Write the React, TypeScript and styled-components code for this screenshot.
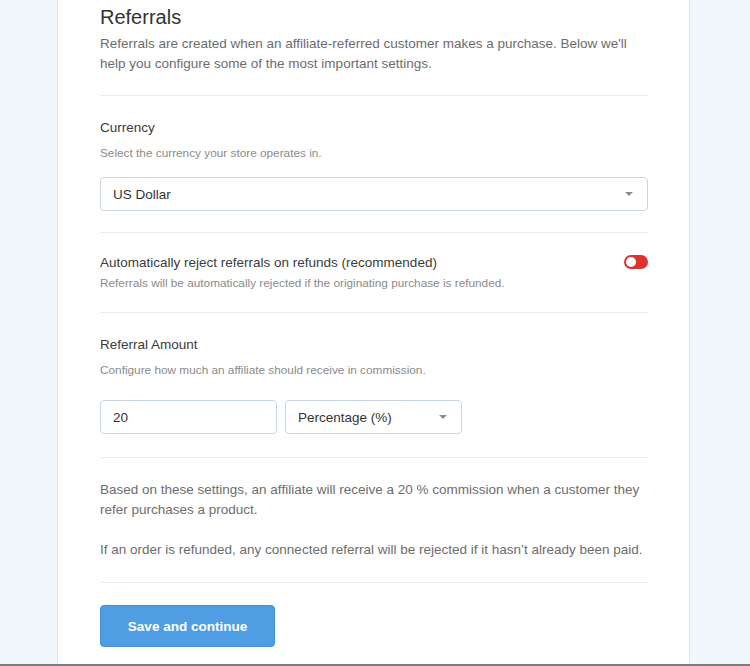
import React from "react"
import styled, { createGlobalStyle } from "styled-components"

const Global = createGlobalStyle`
  html, body {
    margin: 0;
    padding: 0;
    background: #f1f6fd;
    font-family: "Liberation Sans", Arial, sans-serif;
  }
  * { box-sizing: border-box; }
`

const Screen = styled.div`
  display: flex;
  flex-direction: column;
  height: 666px;
  overflow: hidden;
`

const Stage = styled.div`
  flex: 1;
  display: flex;
  padding-left: 57px;
  overflow: hidden;
`

const Card = styled.div`
  width: 633px;
  background: #fff;
  border-left: 1px solid #dfe6ef;
  border-right: 1px solid #dfe6ef;
  padding: 5px 41px 0 42px;
`

const WindowEdge = styled.div`
  height: 2px;
  background: #7d7d7d;
`

const Title = styled.h1`
  margin: 0;
  font-size: 20px;
  line-height: 24px;
  font-weight: 400;
  color: #333;
`

const Intro = styled.p`
  margin: 5px 0 0;
  font-size: 13.5px;
  line-height: 20px;
  color: #6d6d6d;
`

const Section = styled.div<{ top?: number; bottom?: number }>`
  padding: ${(p) => p.top ?? 22}px 0 ${(p) => p.bottom ?? 22}px;
  border-top: 1px solid #e4ebf4;
`

const Head = styled.div`
  margin-bottom: 21px;
`

const Row = styled.div`
  display: flex;
  align-items: flex-start;
  justify-content: space-between;
`

const Label = styled.div`
  font-size: 13.5px;
  line-height: 20px;
  color: #3b3b3b;
`

const Help = styled.div<{ gap?: number }>`
  margin-top: ${(p) => p.gap ?? 6}px;
  font-size: 11.8px;
  line-height: 18px;
  color: #8a8a8a;
`

const Controls = styled.div<{ top: number }>`
  display: flex;
  gap: 8px;
  margin-top: ${(p) => p.top}px;
`

const Box = styled.div<{ width?: number }>`
  display: flex;
  align-items: center;
  justify-content: space-between;
  width: ${(p) => (p.width ? `${p.width}px` : "100%")};
  height: 34px;
  padding: 0 13px 0 12px;
  border: 1px solid #c9d6e4;
  border-radius: 4px;
  background: #fff;
  font-size: 13.5px;
  color: #333;
`

const Caret = styled.span`
  width: 0;
  height: 0;
  border-left: 4px solid transparent;
  border-right: 4px solid transparent;
  border-top: 4px solid #8c8c8c;
  margin-right: 1px;
`

const Toggle = styled.div<{ on: boolean }>`
  display: flex;
  align-items: center;
  width: 24px;
  height: 14px;
  margin-top: 2px;
  padding: 2px;
  border-radius: 7px;
  background: ${(p) => (p.on ? "#4f9ee3" : "#dc3232")};
  justify-content: ${(p) => (p.on ? "flex-end" : "flex-start")};
`

const Knob = styled.span`
  width: 10px;
  height: 10px;
  border-radius: 50%;
  background: #fff;
`

const Summary = styled.p`
  margin: 0;
  font-size: 13.5px;
  line-height: 20px;
  color: #6d6d6d;
  & + & {
    margin-top: 20px;
  }
`

const Button = styled.button`
  width: 175px;
  height: 42px;
  border: 1px solid #3f90d8;
  border-radius: 4px;
  background: #4f9ee3;
  color: #fff;
  font-family: inherit;
  font-size: 13.5px;
  font-weight: 700;
  cursor: pointer;
`

const App = () => (
  <Screen>
    <Global />
    <Stage>
      <Card>
        <Head>
          <Title>Referrals</Title>
          <Intro>
            Referrals are created when an affiliate-referred customer makes a
            purchase. Below we'll help you configure some of the most important
            settings.
          </Intro>
        </Head>

        <Section bottom={21}>
          <Label>Currency</Label>
          <Help>Select the currency your store operates in.</Help>
          <Controls top={15}>
            <Box>
              US Dollar
              <Caret />
            </Box>
          </Controls>
        </Section>

        <Section top={20} bottom={20}>
          <Row>
            <div>
              <Label>Automatically reject referrals on refunds (recommended)</Label>
              <Help gap={1}>
                Referrals will be automatically rejected if the originating
                purchase is refunded.
              </Help>
            </div>
            <Toggle on={false}>
              <Knob />
            </Toggle>
          </Row>
        </Section>

        <Section bottom={23}>
          <Label>Referral Amount</Label>
          <Help>Configure how much an affiliate should receive in commission.</Help>
          <Controls top={21}>
            <Box width={177}>20</Box>
            <Box width={177}>
              Percentage (%)
              <Caret />
            </Box>
          </Controls>
        </Section>

        <Section>
          <Summary>
            Based on these settings, an affiliate will receive a 20 % commission
            when a customer they refer purchases a product.
          </Summary>
          <Summary>
            If an order is refunded, any connected referral will be rejected if
            it hasn’t already been paid.
          </Summary>
        </Section>

        <Section>
          <Button>Save and continue</Button>
        </Section>
      </Card>
    </Stage>
    <WindowEdge />
  </Screen>
)

export default App
